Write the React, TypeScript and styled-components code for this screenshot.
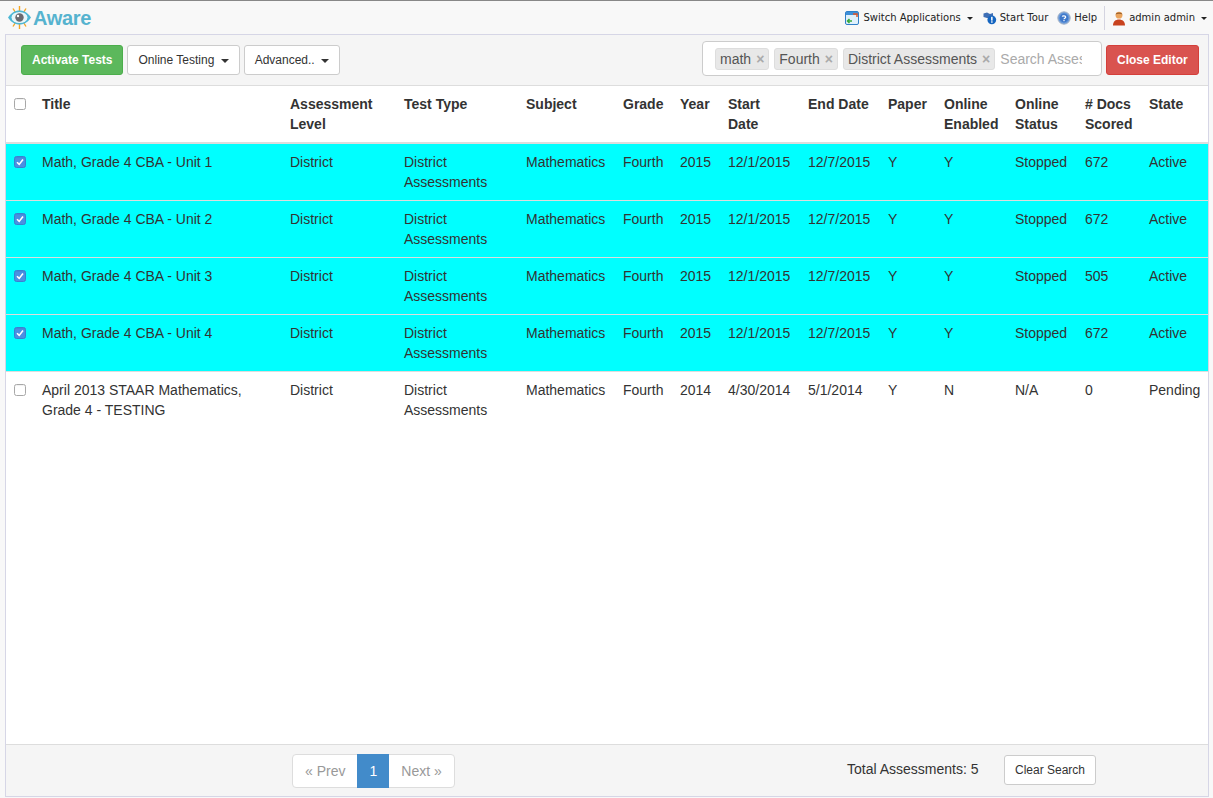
import React from "react";
import styled, { createGlobalStyle } from "styled-components";

const Global = createGlobalStyle`
  html, body { margin: 0; padding: 0; height: 100%; background: #f8f8f8; }
  body { font-family: "Liberation Sans", Arial, sans-serif; font-size: 14px; line-height: 20px; color: #333; }
  * { box-sizing: border-box; }
`;

const Page = styled.div`
  position: relative;
  width: 1213px;
  height: 798px;
  overflow: hidden;
  border-top: 1px solid #888;
`;

const TopBar = styled.header`
  height: 33px;
  display: flex;
  align-items: center;
  justify-content: space-between;
  padding-left: 7px;
`;

const Logo = styled.div`
  display: flex;
  align-items: center;
  height: 30px;
`;

const LogoText = styled.span`
  font-size: 20px;
  font-weight: 700;
  color: #56b3cf;
  letter-spacing: -0.3px;
  margin-left: 1px;
`;

const NavList = styled.nav`
  display: flex;
  align-items: center;
  height: 24px;
  margin-top: 1px;
`;

const NavItem = styled.span<{ $gap: number }>`
  display: flex;
  align-items: center;
  font-family: "DejaVu Sans", Verdana, sans-serif;
  font-size: 10px;
  color: #222;
  margin-right: ${(p) => p.$gap}px;
  white-space: nowrap;
  svg { margin-right: 3px; }
`;

const NavCaret = styled.i`
  display: inline-block;
  width: 0;
  height: 0;
  margin-left: 6px;
  border-top: 3px solid #222;
  border-left: 3px solid transparent;
  border-right: 3px solid transparent;
`;

const NavDivider = styled.span`
  width: 1px;
  height: 24px;
  background: #d4d4e0;
  margin-right: 7px;
`;

const Panel = styled.main`
  position: absolute;
  left: 5px;
  top: 33px;
  width: 1204px;
  height: 763px;
  border: 1px solid #d6d6e6;
  background: #fff;
  display: flex;
  flex-direction: column;
`;

const Toolbar = styled.div`
  height: 51px;
  flex: none;
  position: relative;
  background: #f5f5f5;
  border-bottom: 1px solid #ddd;
`;

const ButtonGroup = styled.div`
  position: absolute;
  left: 15px;
  top: 10px;
  display: flex;
  gap: 4px;
`;

const Button = styled.button<{ $variant?: "success" | "danger" }>`
  height: 30px;
  padding: 0 10px;
  font-family: "Liberation Sans", Arial, sans-serif;
  font-size: 12px;
  line-height: 18px;
  border-radius: 3px;
  border: 1px solid ${(p) => (p.$variant === "success" ? "#4cae4c" : p.$variant === "danger" ? "#d43f3a" : "#ccc")};
  background: ${(p) => (p.$variant === "success" ? "#5cb85c" : p.$variant === "danger" ? "#d9534f" : "#fff")};
  color: ${(p) => (p.$variant ? "#fff" : "#333")};
  font-weight: ${(p) => (p.$variant ? 700 : 400)};
  white-space: nowrap;
`;

const Caret = styled.i`
  display: inline-block;
  width: 0;
  height: 0;
  margin-left: 3px;
  vertical-align: middle;
  border-top: 4px solid #333;
  border-left: 4px solid transparent;
  border-right: 4px solid transparent;
`;

const TagInput = styled.div`
  position: absolute;
  left: 696px;
  top: 6px;
  width: 400px;
  height: 35px;
  background: #fff;
  border: 1px solid #ccc;
  border-radius: 4px;
  display: flex;
  align-items: center;
  padding-left: 12px;
  gap: 5px;
  overflow: hidden;
`;

const Tag = styled.span`
  height: 22px;
  line-height: 20px;
  background: #e8e8e8;
  border: 1px solid #ddd;
  border-radius: 3px;
  padding: 0 4px;
  color: #555;
  white-space: nowrap;
`;

const TagClose = styled.b`
  color: #aaa;
  font-size: 14px;
  margin-left: 5px;
`;

const Placeholder = styled.span`
  display: block;
  width: 82px;
  overflow: hidden;
  white-space: nowrap;
  color: #aaa;
`;

const CloseSlot = styled.div`
  position: absolute;
  left: 1100px;
  top: 10px;
`;

const TableArea = styled.div`
  flex: 1;
  background: #fff;
`;

const Table = styled.table`
  table-layout: fixed;
  width: 1202px;
  border-collapse: collapse;
`;

const Th = styled.th`
  padding: 8px;
  height: 57px;
  text-align: left;
  vertical-align: top;
  font-weight: 700;
  border-bottom: 2px solid #ddd;
  color: #333;
`;

const Tr = styled.tr<{ $selected: boolean }>`
  background: ${(p) => (p.$selected ? "#00ffff" : "#fff")};
`;

const Td = styled.td`
  padding: 8px;
  height: 57px;
  vertical-align: top;
  border-top: 1px solid #ddd;
  color: #333;
`;

const CheckCell = styled.td`
  padding: 12px 0 0 8px;
  vertical-align: top;
  border-top: 1px solid #ddd;
`;

const CheckHead = styled.th`
  padding: 12px 0 0 8px;
  vertical-align: top;
  border-bottom: 2px solid #ddd;
`;

const Box = styled.span<{ $on?: boolean }>`
  display: block;
  width: 12px;
  height: 12px;
  border-radius: 2.5px;
  border: 1px solid ${(p) => (p.$on ? "#3b7fd1" : "#a8a8a8")};
  background: ${(p) => (p.$on ? "#4a90e2" : "#fff")};
  box-shadow: inset 0 1px 1px rgba(0,0,0,0.06);
  svg { display: block; }
`;

const Footer = styled.footer`
  height: 52px;
  flex: none;
  position: relative;
  background: #f5f5f5;
  border-top: 1px solid #ddd;
`;

const Pagination = styled.div`
  position: absolute;
  left: 286px;
  top: 9px;
  display: flex;
  height: 34px;
  background: #fff;
  border: 1px solid #ddd;
  border-radius: 4px;
`;

const PageLink = styled.span<{ $active?: boolean }>`
  display: flex;
  align-items: center;
  justify-content: center;
  padding: 0 12px;
  height: 34px;
  margin-top: -1px;
  color: ${(p) => (p.$active ? "#fff" : "#999")};
  background: ${(p) => (p.$active ? "#428bca" : "transparent")};
  font-weight: 400;
`;

const Total = styled.span`
  position: absolute;
  left: 841px;
  top: 14px;
  color: #333;
`;

const ClearSlot = styled.div`
  position: absolute;
  left: 998px;
  top: 10px;
`;

const widths = [28, 248, 114, 122, 97, 57, 48, 80, 80, 56, 71, 70, 64, 67];
const headers = ["Title", "Assessment Level", "Test Type", "Subject", "Grade", "Year", "Start Date", "End Date", "Paper", "Online Enabled", "Online Status", "# Docs Scored", "State"];

const rows = [
  { on: true, title: "Math, Grade 4 CBA - Unit 1", y: "2015", s: "12/1/2015", e: "12/7/2015", en: "Y", st: "Stopped", d: "672", state: "Active" },
  { on: true, title: "Math, Grade 4 CBA - Unit 2", y: "2015", s: "12/1/2015", e: "12/7/2015", en: "Y", st: "Stopped", d: "672", state: "Active" },
  { on: true, title: "Math, Grade 4 CBA - Unit 3", y: "2015", s: "12/1/2015", e: "12/7/2015", en: "Y", st: "Stopped", d: "505", state: "Active" },
  { on: true, title: "Math, Grade 4 CBA - Unit 4", y: "2015", s: "12/1/2015", e: "12/7/2015", en: "Y", st: "Stopped", d: "672", state: "Active" },
  { on: false, title: "April 2013 STAAR Mathematics, Grade 4 - TESTING", y: "2014", s: "4/30/2014", e: "5/1/2014", en: "N", st: "N/A", d: "0", state: "Pending" },
];

const EyeLogo = () => (
  <svg width="25" height="25" viewBox="0 0 25 25">
    <g stroke="#f5a623" strokeWidth="1.4">
      <path d="M12.5 1v5M12.5 19v5M6 3.5l2.5 4M19 3.5l-2.5 4M6 21.5l2.5-4M19 21.5l-2.5-4" />
    </g>
    <path d="M1 12.5C5 6.5 9 5.5 12.5 5.5S20 6.5 24 12.5C20 18.5 16 19.5 12.5 19.5S5 18.5 1 12.5Z" fill="#4db7d4" />
    <ellipse cx="12.5" cy="12.5" rx="8" ry="5.5" fill="#e8f6fa" />
    <circle cx="12.5" cy="12.5" r="4.2" fill="#6b6b70" />
    <circle cx="11" cy="11" r="1.2" fill="#fff" />
  </svg>
);

const SwitchIcon = () => (
  <svg width="15" height="15" viewBox="0 0 15 15">
    <rect x="0.5" y="0.5" width="13" height="13" rx="1.5" fill="#dff0fb" stroke="#2f7fc8" />
    <rect x="1" y="1" width="12" height="3" fill="#3d8fd8" />
    <path d="M8 3h4v3" fill="none" stroke="#e0552a" strokeWidth="1.5" />
    <path d="M7 10H2.5M4.5 8 2.5 10l2 2" fill="none" stroke="#39a83a" strokeWidth="1.5" />
  </svg>
);

const TourIcon = () => (
  <svg width="14" height="14" viewBox="0 0 14 14">
    <path d="M0.5 2.5 4 1.5 7 3l3-1v5H4L0.5 6Z" fill="#3f6fb5" />
    <circle cx="8.8" cy="8.8" r="4.4" fill="#1565c0" />
    <rect x="8.1" y="5.8" width="1.5" height="3.8" fill="#fff" />
    <rect x="8.1" y="10.3" width="1.5" height="1.4" fill="#fff" />
  </svg>
);

const HelpIcon = () => (
  <svg width="14" height="14" viewBox="0 0 14 14">
    <circle cx="7" cy="7" r="6.2" fill="#6a9bdc" stroke="#a8b4c4" />
    <circle cx="7" cy="7" r="4.4" fill="#3f78c9" />
    <path d="M5.3 5.6C5.5 4.5 8.7 4.4 8.7 6c0 1.2-1.7 1.2-1.7 2.3" fill="none" stroke="#fff" strokeWidth="1.2" />
    <rect x="6.4" y="9" width="1.2" height="1.2" fill="#fff" />
  </svg>
);

const UserIcon = () => (
  <svg width="14" height="15" viewBox="0 0 14 15">
    <circle cx="7" cy="4.2" r="3.4" fill="#eba45c" />
    <path d="M3.6 3.5C4 0.8 10 0.8 10.4 3.5 9 2.6 5 2.6 3.6 3.5Z" fill="#8f5a2a" />
    <path d="M1 14.5c0-4 2.5-6 6-6s6 2 6 6Z" fill="#c8421e" />
  </svg>
);

const CheckMark = () => (
  <svg width="10" height="10" viewBox="0 0 10 10">
    <path d="M2 5.2 4.2 7.4 8 2.6" fill="none" stroke="#fff" strokeWidth="1.6" />
  </svg>
);

export default function App() {
  return (
    <>
      <Global />
      <Page>
        <TopBar>
          <Logo>
            <EyeLogo />
            <LogoText>Aware</LogoText>
          </Logo>
          <NavList>
            <NavItem $gap={10}><SwitchIcon />Switch Applications<NavCaret /></NavItem>
            <NavItem $gap={9}><TourIcon />Start Tour</NavItem>
            <NavItem $gap={7}><HelpIcon />Help</NavItem>
            <NavDivider />
            <NavItem $gap={6}><UserIcon />admin admin<NavCaret /></NavItem>
          </NavList>
        </TopBar>
        <Panel>
          <Toolbar>
            <ButtonGroup>
              <Button $variant="success">Activate Tests</Button>
              <Button>Online Testing <Caret /></Button>
              <Button>Advanced.. <Caret /></Button>
            </ButtonGroup>
            <TagInput>
              <Tag>math<TagClose>×</TagClose></Tag>
              <Tag>Fourth<TagClose>×</TagClose></Tag>
              <Tag>District Assessments<TagClose>×</TagClose></Tag>
              <Placeholder>Search Assessments</Placeholder>
            </TagInput>
            <CloseSlot><Button $variant="danger">Close Editor</Button></CloseSlot>
          </Toolbar>
          <TableArea>
            <Table>
              <colgroup>
                {widths.map((w, i) => <col key={i} width={w} />)}
              </colgroup>
              <thead>
                <tr>
                  <CheckHead><Box /></CheckHead>
                  {headers.map((h) => <Th key={h}>{h}</Th>)}
                </tr>
              </thead>
              <tbody>
                {rows.map((r) => (
                  <Tr key={r.title} $selected={r.on}>
                    <CheckCell><Box $on={r.on}>{r.on && <CheckMark />}</Box></CheckCell>
                    <Td>{r.title}</Td>
                    <Td>District</Td>
                    <Td>District Assessments</Td>
                    <Td>Mathematics</Td>
                    <Td>Fourth</Td>
                    <Td>{r.y}</Td>
                    <Td>{r.s}</Td>
                    <Td>{r.e}</Td>
                    <Td>Y</Td>
                    <Td>{r.en}</Td>
                    <Td>{r.st}</Td>
                    <Td>{r.d}</Td>
                    <Td>{r.state}</Td>
                  </Tr>
                ))}
              </tbody>
            </Table>
          </TableArea>
          <Footer>
            <Pagination>
              <PageLink>« Prev</PageLink>
              <PageLink $active>1</PageLink>
              <PageLink>Next »</PageLink>
            </Pagination>
            <Total>Total Assessments: 5</Total>
            <ClearSlot><Button>Clear Search</Button></ClearSlot>
          </Footer>
        </Panel>
      </Page>
    </>
  );
}
